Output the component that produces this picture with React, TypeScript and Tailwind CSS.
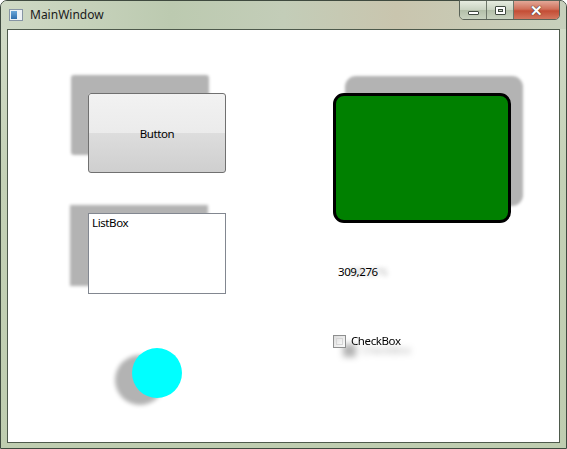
export default function App() {
  const font = { fontFamily: '"Segoe UI", "Noto Sans", "Open Sans", sans-serif' }
  return (
    <div className="w-[567px] h-[449px] bg-white" style={font}>
      <div className="flex flex-col w-[567px] h-[449px] rounded-t-[7px] border border-[#3f4a3f] bg-[linear-gradient(180deg,#d3dcc9_0%,#c4d1b6_40%,#bfcdb0_100%)]">
        {/* title bar */}
        <div className="relative flex h-[28px] items-start bg-[linear-gradient(90deg,#cfd9c5_0%,#bccab0_30%,#c3cdb8_50%,#c9c5ae_70%,#c7d0bc_100%)] rounded-t-[6px]">
          <div className="mt-[8px] ml-[8px] flex h-[12px] w-[14px] border border-[#8795a4] bg-[#eef2f6]">
            <div className="m-[1px] w-[6px] bg-[linear-gradient(180deg,#6aa6d8,#2f6fae)]" />
          </div>
          <span className="ml-[7px] mt-[6px] text-[12px] leading-[16px] text-[#1a1a1a]">MainWindow</span>
          <div className="ml-auto mr-[6px] -mt-px flex h-[20px] rounded-b-[5px] border border-[#5a6358] overflow-hidden">
            <div className="flex w-[27px] items-center justify-center border-r border-[#6d7669] bg-[linear-gradient(180deg,#e6ece0_0%,#c9d3c1_50%,#b3bfa9_51%,#c8d2bf_100%)]">
              <div className="mt-[5px] h-[4px] w-[11px] rounded-[1px] border border-[#404a40] bg-white" />
            </div>
            <div className="flex w-[27px] items-center justify-center border-r border-[#6d7669] bg-[linear-gradient(180deg,#e6ece0_0%,#c9d3c1_50%,#b3bfa9_51%,#c8d2bf_100%)]">
              <div className="flex h-[9px] w-[11px] items-center justify-center rounded-[1px] border border-[#404a40] bg-white">
                <div className="h-[3px] w-[5px] border border-[#404a40] bg-[#c9d3c1]" />
              </div>
            </div>
            <div className="flex w-[45px] items-center justify-center bg-[linear-gradient(180deg,#e3a898_0%,#d0705a_45%,#c44d35_55%,#d3775f_100%)]">
              <span className="text-[15px] font-bold leading-none text-white [text-shadow:0_0_1px_#3a2a2a,0_0_1px_#3a2a2a]">✕</span>
            </div>
          </div>
        </div>
        {/* client area */}
        <div className="mx-[6px] mb-[5px] flex flex-1 border border-[#4e5a4c] bg-white text-[11.5px] leading-[16px] tracking-[-0.4px] text-black">
          <div className="flex flex-col pl-[80px] pt-[63px]">
            <div className="flex h-[80px] w-[138px] items-center justify-center rounded-[3px] border border-[#707070] bg-[linear-gradient(180deg,#f2f2f2_0%,#ebebeb_50%,#dddddd_50%,#cfcfcf_100%)] pt-[2px] shadow-[-17px_-18px_3px_#b3b3b3]">
              Button
            </div>
            <div className="mt-[40px] h-[81px] w-[138px] border border-[#828790] bg-white px-[3px] pt-[1px] shadow-[-18px_-8px_3px_#b3b3b3]">
              ListBox
            </div>
            <div className="mt-[54px] ml-[44px] h-[50px] w-[50px] rounded-full bg-[#00ffff] shadow-[-17px_7px_4px_#b3b3b3]" />
          </div>
          <div className="ml-[107px] flex flex-col pt-[63px]">
            <div className="h-[130px] w-[178px] rounded-[11px] border-[3px] border-black bg-[#008000] shadow-[12px_-17px_3px_#b3b3b3]" />
            <div className="mt-[41px] pl-[5px] [text-shadow:10px_0px_4px_rgba(0,0,0,0.25)]">309,276</div>
            <div className="mt-[53px] flex items-center gap-[5px] [filter:drop-shadow(10px_9px_3px_rgba(0,0,0,0.3))]">
              <div className="h-[13px] w-[13px] border border-[#8e8f8f] bg-[linear-gradient(135deg,#dcdcdc,#fbfbfb)] p-[2px]">
                <div className="h-full w-full border border-[#d6d6d6] bg-[linear-gradient(135deg,#e4e4e4,#f7f7f7)]" />
              </div>
              <span>CheckBox</span>
            </div>
          </div>
        </div>
      </div>
    </div>
  )
}
